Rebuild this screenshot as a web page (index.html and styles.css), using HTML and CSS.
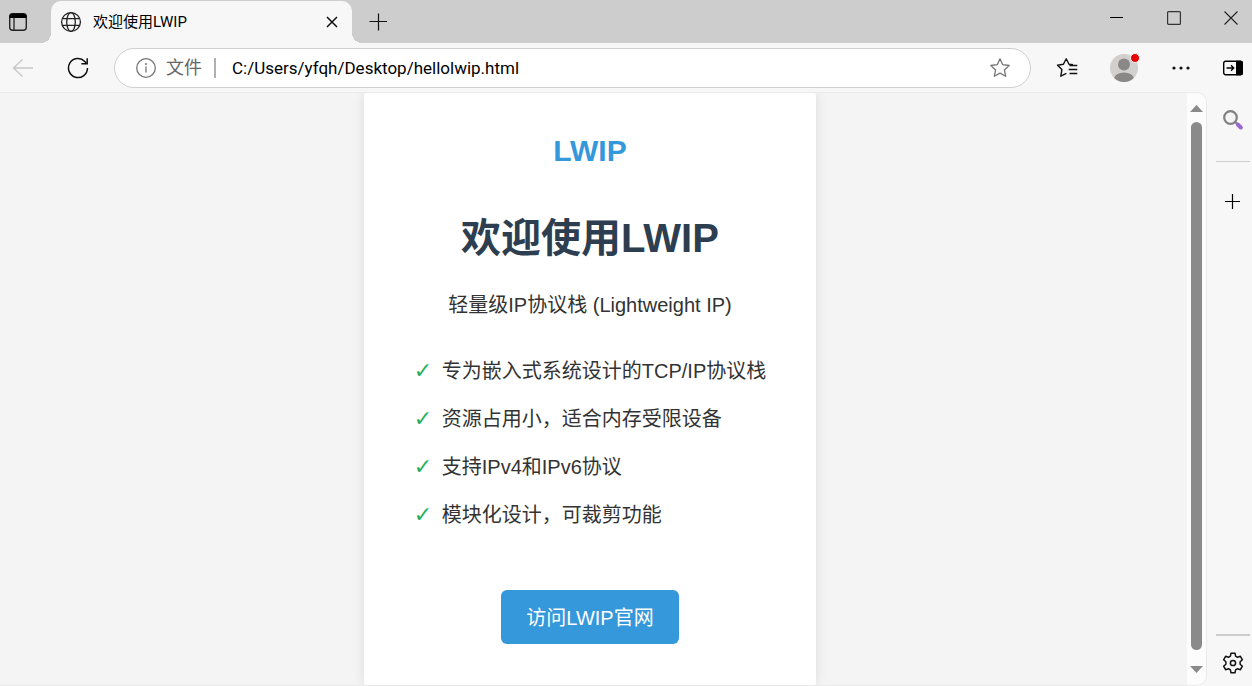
FILE: index.html
```
<!DOCTYPE html>
<html lang="zh-CN">
<head>
    <meta charset="UTF-8">
    <meta name="viewport" content="width=device-width, initial-scale=1.0">
    <title>欢迎使用LWIP</title>
    <link rel="stylesheet" href="styles.css">
</head>
<body>
    <div class="tab-bar">
        <button class="tab-menu" aria-label="标签页操作">
            <svg width="20" height="20" viewBox="0 0 20 20"><rect x="1.7" y="1.7" width="16.6" height="16.6" rx="3" fill="none" stroke="#222" stroke-width="1.4"/><path d="M1.5 6V4.5a3 3 0 0 1 3-3h11a3 3 0 0 1 3 3V6z" fill="#000"/><path d="M6 6v12" stroke="#222" stroke-width="1.3"/></svg>
        </button>
        <div class="tab">
            <svg width="22" height="22" viewBox="0 0 22 22" fill="none" stroke="#222" stroke-width="1.3"><circle cx="11" cy="11" r="9.4"/><ellipse cx="11" cy="11" rx="4.3" ry="9.4"/><path d="M2.4 7.7h17.2M2.4 14.3h17.2"/></svg>
            <span class="tab-title">欢迎使用LWIP</span>
            <button class="tab-close" aria-label="关闭标签页">
                <svg width="12" height="12" viewBox="0 0 12 12"><path d="M1 1l10 10M11 1L1 11" stroke="#111" stroke-width="1.5"/></svg>
            </button>
        </div>
        <button class="new-tab" aria-label="新建标签页">
            <svg width="18" height="18" viewBox="0 0 18 18"><path d="M9.5 .5v17M.5 8.5h18" stroke="#111" stroke-width="1.2"/></svg>
        </button>
        <div class="window-buttons">
            <button aria-label="最小化"><svg width="14" height="14" viewBox="0 0 14 14"><path d="M0 6.5h13" stroke="#000"/></svg></button>
            <button aria-label="最大化"><svg width="14" height="14" viewBox="0 0 14 14"><rect x=".6" y=".6" width="12.8" height="12.8" rx="1" fill="none" stroke="#333" stroke-width="1.2"/></svg></button>
            <button aria-label="关闭"><svg width="14" height="14" viewBox="0 0 14 14"><path d="M.5 .5l13 13M13.5 .5l-13 13" stroke="#222" stroke-width="1.1"/></svg></button>
        </div>
    </div>

    <div class="toolbar">
        <div class="nav-buttons">
            <button aria-label="后退" disabled>
                <svg width="22" height="20" viewBox="0 0 22 20" fill="none" stroke="#c6c6c6" stroke-width="1.3"><path d="M21 10H1.5M10.5 1.5L1.5 10l9 8.5"/></svg>
            </button>
            <button aria-label="刷新">
                <svg width="22" height="22" viewBox="0 0 22 22" fill="none" stroke="#111" stroke-width="1.5"><path d="M20.5 11A9.5 9.5 0 1 1 17.8 4.4L20 6.7"/><path d="M20.2 1.2v5.6h-5.8"/></svg>
            </button>
        </div>
        <div class="address">
            <svg width="20" height="20" viewBox="0 0 20 20" fill="none" stroke="#767676" stroke-width="1.3"><circle cx="10" cy="10" r="9.3"/><path d="M10 8.6v6"/><circle cx="10" cy="6" r="1" fill="#767676" stroke="none"/></svg>
            <label class="scheme" for="url">文件</label>
            <input type="text" id="url" value="C:/Users/yfqh/Desktop/hellolwip.html">
            <button class="favorite" aria-label="收藏此页">
                <svg width="22" height="22" viewBox="0 0 22 22"><path d="M11 1.8l2.7 5.9 6.5.8-4.8 4.4 1.3 6.4L11 16.1l-5.7 3.2 1.3-6.4L1.8 8.5l6.5-.8z" fill="none" stroke="#767676" stroke-width="1.3" stroke-linejoin="round"/></svg>
            </button>
        </div>
        <div class="tools">
            <button aria-label="收藏夹">
                <svg width="22" height="22" viewBox="0 0 22 22" fill="none" stroke="#111" stroke-width="1.4" stroke-linejoin="round"><path d="M17 7.7l-4-.4-2.8-5.5-2.8 5.500-5.900.9 4.400 4.400-1.100 6.600 5.600-2.900"/><path d="M13.5 8.500h7.800M12.7 12.500h8.6M13.500 16.500h7.800"/></svg>
            </button>
            <button class="profile" aria-label="用户配置">
                <svg width="28" height="28" viewBox="0 0 28 28"><circle cx="14" cy="14" r="14" fill="#d2d0ce"/><circle cx="14" cy="10.5" r="6" fill="#8a8886"/><path d="M4.2 24a9.9 6.4 0 0 1 19.6 0A14 14 0 0 1 4.2 24z" fill="#8a8886"/></svg>
                <span class="badge"></span>
            </button>
            <button aria-label="设置及其他">
                <svg width="18" height="4" viewBox="0 0 18 4" fill="#111"><circle cx="2" cy="2" r="1.6"/><circle cx="9" cy="2" r="1.6"/><circle cx="16" cy="2" r="1.6"/></svg>
            </button>
        </div>
        <button aria-label="侧边栏">
            <svg width="20" height="16" viewBox="0 0 20 16"><rect x=".7" y="1.2" width="18.6" height="13.6" rx="2" fill="none" stroke="#000" stroke-width="1.4"/><path d="M13 .8h4.5a2.5 2.5 0 0 1 2.5 2.5v9.4a2.5 2.5 0 0 1-2.5 2.5H13z"/><path d="M3.5 8h7M8 5.2L10.8 8 8 10.8" fill="none" stroke="#000" stroke-width="1.3"/></svg>
        </button>
    </div>

    <div class="content">
        <div class="view">
            <main class="page">
                <div class="container">
                    <div class="logo">LWIP</div>
                    <h1>欢迎使用LWIP</h1>
                    <p>轻量级IP协议栈 (Lightweight IP)</p>
                    <ul class="features">
                        <li>专为嵌入式系统设计的TCP/IP协议栈</li>
                        <li>资源占用小，适合内存受限设备</li>
                        <li>支持IPv4和IPv6协议</li>
                        <li>模块化设计，可裁剪功能</li>
                    </ul>
                    <a class="btn" href="#">访问LWIP官网</a>
                </div>
            </main>
            <div class="scrollbar">
                <svg width="13" height="7" viewBox="0 0 13 7"><path d="M6.5 0L13 7H0z" fill="#8a8a8a"/></svg>
                <div class="thumb"></div>
                <svg width="13" height="7" viewBox="0 0 13 7"><path d="M0 0h13L6.5 7z" fill="#8a8a8a"/></svg>
            </div>
        </div>
        <div class="sidebar">
            <button class="search" aria-label="搜索">
                <svg width="22" height="22" viewBox="0 0 22 22" fill="none"><path d="M12.8 12.5l3 3" stroke="#777" stroke-width="2"/><path d="M15.800 15.500l3 3" stroke="#9a68cf" stroke-width="4" stroke-linecap="round"/><circle cx="8.5" cy="8.5" r="6.3" fill="#f4f4f4" stroke="#808080" stroke-width="2.2"/></svg>
            </button>
            <button class="add" aria-label="自定义">
                <svg width="16" height="16" viewBox="0 0 16 16"><path d="M7.5 0v15M0 7.5h15" stroke="#000" stroke-width="1.2"/></svg>
            </button>
            <button class="settings" aria-label="设置">
                <svg width="22" height="22" viewBox="0 0 22 22" fill="none" stroke="#111" stroke-width="1.5" stroke-linejoin="round"><path d="M9 1.2h4l.6 3 1.9 1.1 2.9-1 2 3.5-2.3 2v2.4l2.3 2-2 3.5-2.9-1-1.9 1.1-.6 3H9l-.6-3-1.9-1.100-2.900 1-2-3.500 2.300-2V9.800l-2.300-2 2-3.500 2.900 1 1.900-1.100z"/><circle cx="11" cy="11" r="2.6"/></svg>
            </button>
        </div>
    </div>
</body>
</html>
```
FILE: styles.css
```
* {
    box-sizing: border-box;
}
body {
    margin: 0;
    height: 100vh;
    display: flex;
    flex-direction: column;
    overflow: hidden;
    background-color: #f7f7f7;
    font-family: Roboto, "Noto Sans CJK SC", sans-serif;
}
button {
    display: flex;
    align-items: center;
    justify-content: center;
    flex: none;
    width: 32px;
    height: 32px;
    padding: 0;
    border: none;
    background: none;
}

/* tabs */
.tab-bar {
    display: flex;
    align-items: center;
    height: 43px;
    flex: none;
    background-color: #cdcdcd;
}
.tab-menu {
    width: 36px;
}
.tab {
    position: relative;
    display: flex;
    align-items: center;
    align-self: flex-end;
    width: 301px;
    height: 42px;
    margin-left: 15px;
    padding: 0 4px 0 9px;
    border-radius: 10px 10px 0 0;
    background-color: #f7f7f7;
}
.tab::before, .tab::after {
    content: "";
    position: absolute;
    bottom: 0;
    width: 10px;
    height: 10px;
}
.tab::before {
    right: 100%;
    background: radial-gradient(circle at 0 0, transparent 10px, #f7f7f7 10px);
}
.tab::after {
    left: 100%;
    background: radial-gradient(circle at 100% 0, transparent 10px, #f7f7f7 10px);
}
.tab-title {
    flex: 1;
    margin-left: 11px;
    font-size: 15px;
    line-height: 20px;
}
.new-tab {
    margin-left: 10px;
}
.window-buttons {
    display: flex;
    gap: 25px;
    margin: 0 5px 8px auto;
}

/* toolbar */
.toolbar {
    display: flex;
    align-items: center;
    height: 49px;
    flex: none;
    gap: 20px;
    padding: 1px 3px 0 7px;
}
.nav-buttons {
    display: flex;
    gap: 23px;
}
.tools {
    display: flex;
    gap: 25px;
}
.address {
    display: flex;
    align-items: center;
    flex: 1;
    height: 40px;
    padding: 0 14px 0 21px;
    border: 1px solid #cfcfcf;
    border-radius: 20px;
    background-color: white;
}
.scheme {
    margin-left: 10px;
    padding-right: 12px;
    border-right: 2px solid #b0b0b0;
    font-size: 18px;
    line-height: 20px;
    color: #666;
}
.address input {
    flex: 1;
    min-width: 0;
    padding: 0 0 0 16px;
    border: none;
    outline: none;
    background: none;
    font-family: inherit;
    font-size: 17px;
    color: black;
}
.profile {
    position: relative;
}
.badge {
    position: absolute;
    top: 1px;
    right: 0;
    width: 10px;
    height: 10px;
    border: 1px solid #f7f7f7;
    border-radius: 50%;
    background-color: #e60000;
}

/* page area */
.content {
    display: flex;
    flex: 1;
    min-height: 0;
}
.view {
    display: flex;
    flex: 1;
    overflow: hidden;
    border: solid #ebebeb;
    border-width: 1px 1px 1px 0;
    border-radius: 0 10px 10px 0;
}
.page {
    display: flex;
    justify-content: center;
    flex: 1;
    padding-right: 7px;
    overflow: hidden;
    background-color: #f4f4f4;
    font-family: "Liberation Sans", "Noto Sans CJK SC", sans-serif;
    font-size: 20px;
    line-height: 32px;
    color: #333;
}
.container {
    padding: 34px 50px 42px;
    border-radius: 2px;
    background-color: white;
    box-shadow: 0 0 12px rgba(0, 0, 0, 0.1);
    text-align: center;
}
.logo {
    font-size: 30px;
    line-height: 48px;
    font-weight: bold;
    color: #3498db;
}
h1 {
    margin: 31px 0 19px;
    font-size: 40px;
    line-height: 64px;
    color: #2c3e50;
}
p {
    margin: 0;
}
.features {
    margin: 34px 0 59px;
    padding: 0;
    list-style: none;
    text-align: left;
}
.features li {
    display: flex;
    margin-bottom: 16px;
}
.features li::before {
    content: "✓";
    width: 28px;
    font-family: "DejaVu Sans", sans-serif;
    font-size: 22px;
    color: #27ae60;
}
.features li:last-child {
    margin-bottom: 0;
}
.btn {
    display: inline-block;
    padding: 12px 25px 10px;
    border-radius: 6px;
    background-color: #3498db;
    color: white;
    text-decoration: none;
}

.scrollbar {
    display: flex;
    flex-direction: column;
    align-items: center;
    gap: 10px;
    width: 19px;
    padding: 12px 0;
    background-color: #fcfcfc;
}
.thumb {
    flex: 1;
    width: 11px;
    margin-bottom: 6px;
    border-radius: 6px;
    background-color: #8a8a8a;
}

/* side panel */
.sidebar {
    display: flex;
    flex-direction: column;
    width: 45px;
    padding-left: 9px;
}
.sidebar button {
    width: 34px;
}
.sidebar .search {
    height: 70px;
    padding-bottom: 14px;
    border-bottom: 1px solid #cdcdcd;
}
.sidebar .add {
    height: 80px;
}
.sidebar .settings {
    height: 52px;
    margin-top: auto;
    padding-top: 4px;
    border-top: 2px solid #cdcdcd;
}
```
